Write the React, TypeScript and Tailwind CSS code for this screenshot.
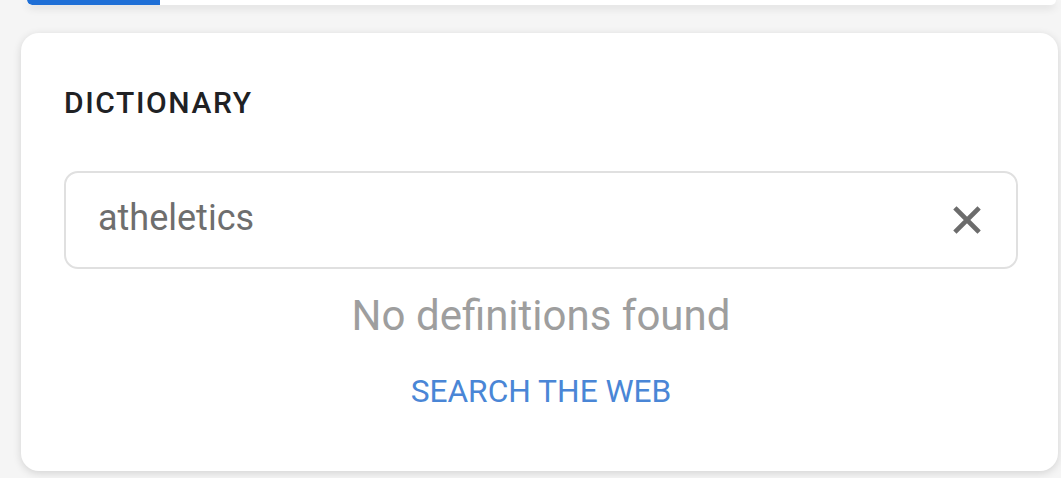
import React from "react";

export default function App() {
  return (
    <div
      className="w-[1061px] h-[478px] overflow-hidden bg-[#f5f5f5] flex flex-col"
      style={{ fontFamily: "Roboto, 'Noto Sans', sans-serif" }}
    >
      <div className="ml-[27px] mr-[5px] h-[5px] shrink-0 bg-white rounded-b-[16px] shadow-[0_3px_8px_rgba(0,0,0,0.12)] flex overflow-hidden">
        <div className="w-[133px] h-full bg-[#1f6fd6] rounded-bl-[16px]" />
      </div>
      <div className="mt-[28px] ml-[21px] mr-[3px] h-[438px] shrink-0 bg-white rounded-[18px] shadow-[0_2px_8px_rgba(0,0,0,0.14)] pl-[43px] pr-[40px] pt-[55px] flex flex-col">
        <div className="text-[30px] leading-none font-medium tracking-[1.6px] text-[#202124]">
          DICTIONARY
        </div>
        <div className="mt-[53px] h-[98px] border-2 border-[#e0e0e0] rounded-[14px] flex items-center pl-[32px] pr-[32px] pb-[4px]">
          <span className="flex-1 text-[36px] leading-none text-[#6e6e6e]">atheletics</span>
          <svg width="30" height="30" viewBox="0 0 30 30" className="mr-[2px] mt-[4px]">
            <path d="M4.5 4.5 L25.5 25.5 M25.5 4.5 L4.5 25.5" stroke="#6c6c6c" strokeWidth="4.6" strokeLinecap="square" />
          </svg>
        </div>
        <div className="mt-[26px] text-center text-[42px] leading-none text-[#9e9e9e]">
          No definitions found
        </div>
        <div className="mt-[39px] text-center text-[31.7px] leading-none text-[#4a86d6]">
          SEARCH THE WEB
        </div>
      </div>
    </div>
  );
}
